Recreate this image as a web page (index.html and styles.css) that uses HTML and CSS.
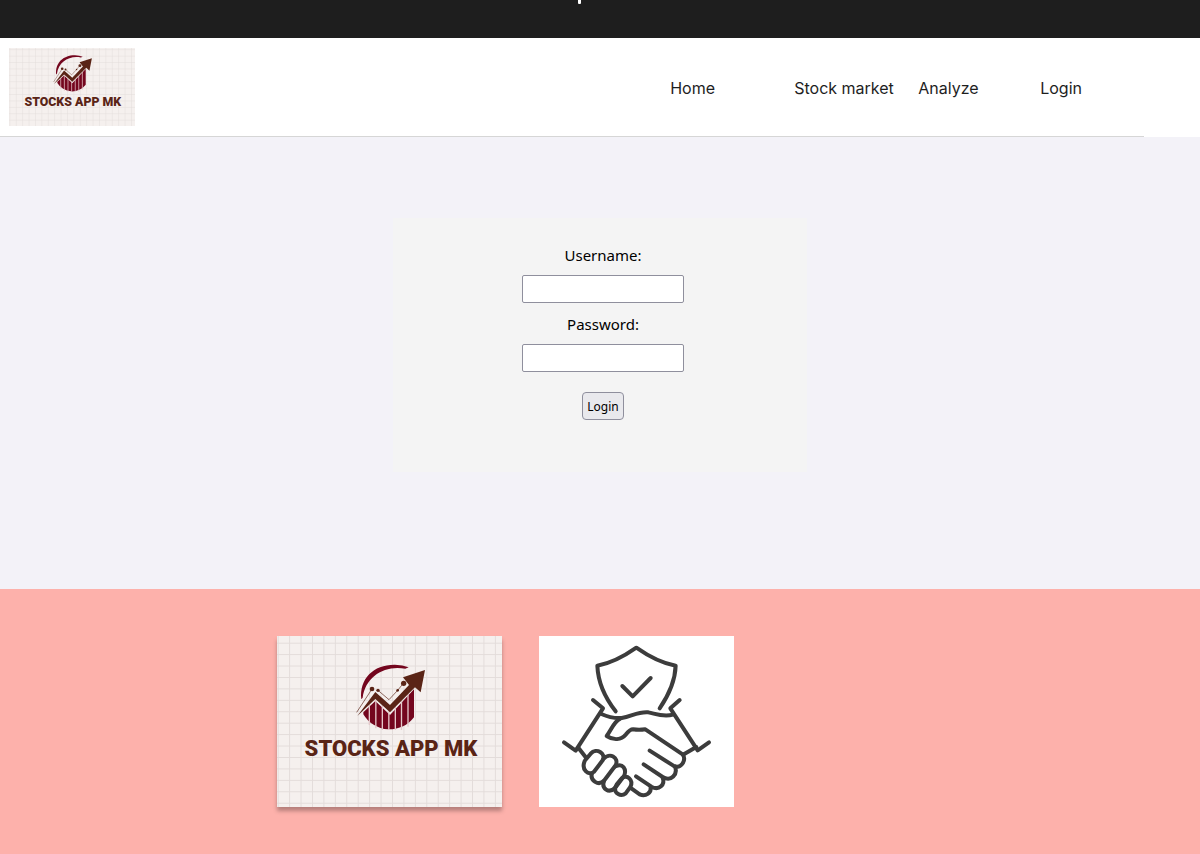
FILE: index.html
```html
<!DOCTYPE html>
<html lang="en">
<head>
  <meta charset="utf-8">
  <meta name="viewport" content="width=device-width, initial-scale=1">
  <title>Stocks App MK - Login</title>
  <link rel="stylesheet" href="styles.css">
</head>
<body>
  <div class="topbar"><span class="topbar-mark"></span></div>

  <header class="header">
    <a class="brand" href="#" aria-label="Stocks App MK">
      <svg class="brand-logo" viewBox="0 0 225 171" preserveAspectRatio="xMidYMid slice">
        <defs>
          <pattern id="grid" x="0.7" y="6.7" width="11.43" height="11.43" patternUnits="userSpaceOnUse">
            <path d="M.5 0V11.43M0 .5H11.43" stroke="#e3dcda" fill="none"/>
          </pattern>
          <g id="chart-mark" transform="translate(-7 -11) scale(.33333)">
            <path fill="#74061e" d="M274 223C267 160 312 118 375 119Q398 120 416 127L406 131C345 119 286 154 278 218Z"/>
            <path fill="#74061e" d="M280 262L316 228L360 270L432 193V277A92 92 0 0 1 280 268Z"/>
            <path stroke="#e4c8ca" stroke-width="4" d="M298 235V300M317.500 225V310M337 240V315M356.500 255V315M376 240V315M394.500 225V315M414 205V305"/>
            <path fill="#5a2416" d="M262 273L316 201L360 240L417 180L399 157L465 135L452 202L435 187L360 262L316 222Z"/>
            <path fill="none" stroke="#5a2416" stroke-width="2" d="M260 262L306 192M324 196L357 224L383 196L400 175"/>
            <g fill="#5a2416"><circle cx="306" cy="192" r="7"/><circle cx="324" cy="196" r="5"/><circle cx="383" cy="196" r="4"/><circle cx="401" cy="175" r="8"/></g>
          </g>
        </defs>
        <rect width="225" height="171" fill="#f5f0ee"/>
        <rect width="225" height="171" fill="url(#grid)"/>
        <use href="#chart-mark"/>
        <text class="logo-text" x="114" y="120">STOCKS APP MK</text>
      </svg>
    </a>
    <nav class="nav">
      <a href="#">Home</a>
      <a href="#">Stock market</a>
      <a href="#">Analyze</a>
      <a href="#">Login</a>
    </nav>
  </header>

  <main class="main">
    <form class="login">
      <label for="username">Username:</label>
      <input id="username" type="text">
      <label for="password">Password:</label>
      <input id="password" type="password">
      <button type="button">Login</button>
    </form>
  </main>

  <footer class="footer">
    <div class="footer-inner">
      <svg class="footer-logo" viewBox="0 0 225 171" role="img" aria-label="Stocks App MK">
        <rect width="225" height="171" fill="#f5f0ee"/>
        <rect width="225" height="171" fill="url(#grid)"/>
        <use href="#chart-mark"/>
        <text class="logo-text" x="114" y="120">STOCKS APP MK</text>
      </svg>
      <svg class="footer-trust" viewBox="12 18 585 513" role="img" aria-label="Trusted partnership">
        <g fill="none" stroke="#3c3c3c" stroke-width="12" stroke-linecap="round" stroke-linejoin="round">
          <path d="M242 244Q190 178 187 107Q240 98 304 53Q368 98 422 107Q420 168 374 235"/>
          <path d="M262 168L293 199L347 144"/>
          <path d="M174 210L204 235L122 362L87 337"/>
          <path d="M434 210L406 235L488 361L522 337"/>
          <path d="M199 252Q230 266 260 264C290 259 310 244 340 247C364 252 384 262 414 254"/>
          <path d="M256 266C236 275 229 300 215 318C236 332 258 330 273 313Q285 298 294 298Q312 301 331 298L444 374L484 351"/>
          <path d="M130 353L154 384"/>
          <path d="M344 362L415 407C438 419 454 392 444 374"/>
          <path d="M326 403L383 441C409 456 429 432 420 410"/>
          <path d="M303 439L349 470C373 483 391 463 383 443"/>
          <path d="M290 476L314 493C332 501 350 488 347 471"/>
          <path d="M151 390L167 371C184 352 214 370 203 391L177 425C161 439 138 420 149 393Z"/>
          <path d="M205 387C223 366 253 381 242 406L207 452C191 469 164 452 171 430"/>
          <path d="M242 409C263 398 276 418 267 438L240 474C221 492 199 475 207 454"/>
          <path d="M246 462L261 444C275 433 297 449 286 471L272 490C257 502 238 489 240 474Z"/>
        </g>
      </svg>
    </div>
  </footer>
</body>
</html>
```
FILE: styles.css
```css
* {
  box-sizing: border-box;
}

body {
  margin: 0;
  min-height: 100vh;
  display: flex;
  flex-direction: column;
  background: #fff;
  color: #000;
  font-family: "Noto Sans", "Open Sans", sans-serif;
}

.topbar {
  height: 38px;
  padding-right: 41px;
  display: flex;
  justify-content: center;
  background: #1e1e1e;
}

.topbar-mark {
  width: 3px;
  height: 4px;
  border-radius: 0 0 1px 1px;
  background: #fff;
}

.header {
  margin-right: 56px;
  padding: 10px 62px 10px 9px;
  display: flex;
  align-items: center;
  justify-content: space-between;
  border-bottom: 1px solid #d6d6d6;
}

.brand,
.brand-logo,
.footer svg {
  display: block;
}

.brand-logo {
  width: 126px;
  height: 78px;
}

.logo-text {
  font: 900 22px Roboto, sans-serif;
  text-anchor: middle;
  fill: #5a2416;
}

.nav {
  padding-top: 2px;
  display: grid;
  grid-template-columns: 124px 124px 122px auto;
}

.nav a {
  color: #1e1e1e;
  font: 16px/24px Inter, sans-serif;
  text-decoration: none;
  white-space: nowrap;
}

.main {
  flex: 1;
  padding: 81px 20px 117px;
  display: flex;
  justify-content: center;
  background: #f3f2f8;
}

.login {
  width: 100%;
  max-width: 414px;
  padding: 27px 0 52px 6px;
  display: flex;
  flex-direction: column;
  align-items: center;
  background: #f4f4f4;
}

.login label {
  margin-bottom: 10px;
  font-size: 15px;
  line-height: 20px;
}

.login input {
  width: 162px;
  height: 28px;
  margin-bottom: 11px;
  padding: 4px;
  border: 1px solid #8f8f9d;
  border-radius: 2px;
  background: #fff;
  font: inherit;
}

.login button {
  height: 28px;
  margin-top: 9px;
  padding: 0 4px;
  border: 1px solid #8f8f9d;
  border-radius: 4px;
  background: #e9e9ed;
  color: #000;
  font: 12px "Noto Sans", sans-serif;
}

.footer {
  padding: 47px 20px;
  background: #fdb1ab;
}

.footer-inner {
  max-width: 646px;
  margin: 0 auto;
  display: flex;
  flex-wrap: wrap;
  gap: 37px;
}

.footer-logo {
  width: 225px;
  height: 171px;
  box-shadow: 0 4px 4px rgba(0, 0, 0, 0.28);
}

.footer-trust {
  width: 195px;
  height: 171px;
  background: #fff;
}
```
